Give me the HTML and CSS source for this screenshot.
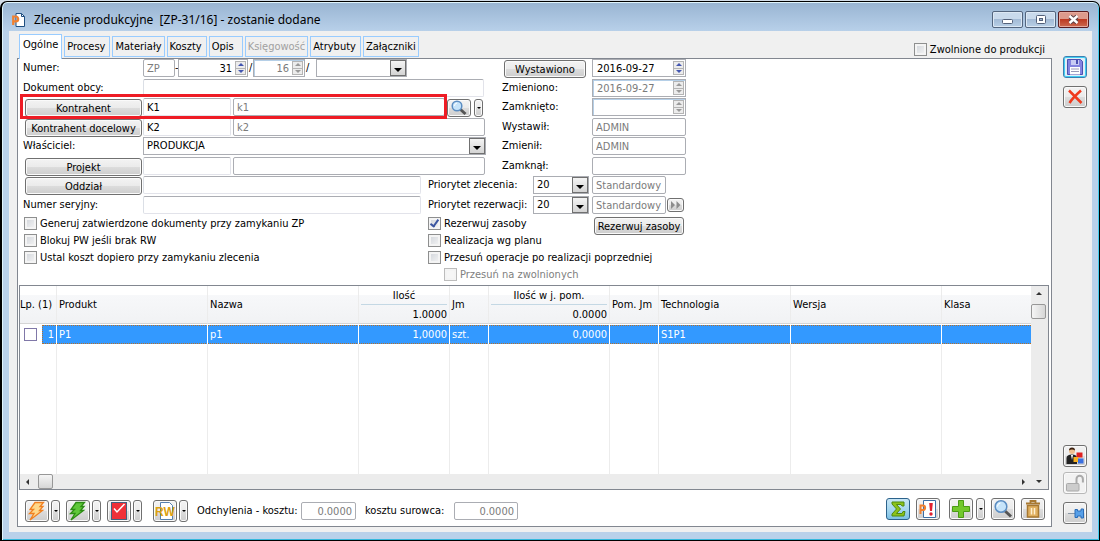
FILE: index.html
```html
<!DOCTYPE html>
<html lang="pl">
<head>
<meta charset="utf-8">
<title>Zlecenie produkcyjne</title>
<link rel="stylesheet" href="styles.css">
</head>
<body>
<div class="window">
  <header class="titlebar">
    <svg class="app-icon" width="14" height="14" viewBox="0 0 14 14" aria-hidden="true"><path d="M4 .5h5.500l3 3v10H4z" fill="#fff" stroke="#1f4e80"/><path d="M9.500.5v3h3" fill="none" stroke="#1f4e80"/><path d="M1.200 12V3.500h2.600a2.300 2.300 0 0 1 0 4.800H1.500" fill="none" stroke="#f08030" stroke-width="2.200"/></svg>
    <h1 class="title">Zlecenie produkcyjne&nbsp; [ZP-31/16] - zostanie dodane</h1>
    <div class="controls">
      <button class="ctl" aria-label="Minimalizuj"><svg width="29" height="15" viewBox="0 0 29 15"><rect x="9.500" y="7.500" width="10" height="4" rx="1" fill="#fff" stroke="#53617a"/></svg></button>
      <button class="ctl" aria-label="Maksymalizuj"><svg width="29" height="15" viewBox="0 0 29 15"><rect x="10.500" y="3.500" width="9" height="8" rx="1" fill="#fff" stroke="#53617a"/><rect x="13.500" y="6.500" width="3" height="2" fill="#9fb6d0" stroke="#53617a"/></svg></button>
      <button class="ctl ctl-close" aria-label="Zamknij"><svg width="29" height="15" viewBox="0 0 29 15"><path d="M11 4.500l7 6M18 4.500l-7 6" stroke="#5b4046" stroke-width="4.500"/><path d="M10.500 4l8 7M18.500 4l-8 7" stroke="#fff" stroke-width="2.400"/></svg></button>
    </div>
  </header>

  <div class="client">
    <main class="main">
      <div class="top">
        <nav class="tabs" role="tablist">
          <button class="tab tab-active" role="tab" aria-selected="true">Ogólne</button>
          <button class="tab tab-roomy" role="tab">Procesy</button>
          <button class="tab" role="tab">Materiały</button>
          <button class="tab tab-roomy" role="tab">Koszty</button>
          <button class="tab tab-opis" role="tab">Opis</button>
          <button class="tab" role="tab" disabled>Księgowość</button>
          <button class="tab tab-roomy" role="tab">Atrybuty</button>
          <button class="tab" role="tab">Załączniki</button>
        </nav>
        <label class="check released"><input type="checkbox">Zwolnione do produkcji</label>
      </div>

      <section class="panel">
        <form class="form">
          <div class="band">
            <div class="fields fields-wide">
              <div class="row">
                <label class="lab" for="nr">Numer:</label>
                <input class="box w-zp" value="ZP" disabled aria-label="Seria"><span class="sep">-</span>
                <span class="spinbox w-nr"><input id="nr" class="num" value="31"><span class="spin"><button type="button" class="up" aria-label="Więcej"></button><button type="button" class="down" aria-label="Mniej"></button></span></span><span class="sep sep-slash">/</span>
                <span class="spinbox w-year off"><input class="num" value="16" disabled aria-label="Rok"><span class="spin"><button type="button" class="up" aria-label="Więcej" disabled></button><button type="button" class="down" aria-label="Mniej" disabled></button></span></span><span class="sep sep-slash sep-last">/</span>
                <span class="combo w-suffix"><select aria-label="Sufiks"><option></option></select></span>
              </div>
              <div class="row"><label class="lab" for="dok">Dokument obcy:</label><input id="dok" class="box edit w-340"></div>
              <div class="row marked">
                <div class="lab"><button type="button" class="btn btn-lab">Kontrahent</button></div>
                <input class="box edit w-code" value="K1" aria-label="Kontrahent kod"><input class="box w-name-s" value="k1" disabled aria-label="Kontrahent nazwa">
                <button type="button" class="btn btn-find" aria-label="Szukaj"><svg width="18" height="16" viewBox="0 0 18 16"><path d="M10.500 9.500l5 4.500" stroke="#555" stroke-width="3"/><circle cx="7" cy="6" r="4.800" fill="#c6e4fa" stroke="#5b8dc2" stroke-width="1.500"/><path d="M4.500 6a3 3 0 0 1 2.500-3" stroke="#fff" fill="none"/></svg></button><button type="button" class="btn drop" aria-label="Więcej opcji"></button>
              </div>
              <div class="row">
                <div class="lab"><button type="button" class="btn btn-lab">Kontrahent docelowy</button></div>
                <input class="box edit w-code" value="K2" aria-label="Kontrahent docelowy kod"><input class="box w-name" value="k2" disabled aria-label="Kontrahent docelowy nazwa">
              </div>
              <div class="row"><label class="lab" for="own">Właściciel:</label><span class="combo w-343"><select id="own"><option>PRODUKCJA</option></select></span></div>
              <div class="row">
                <div class="lab"><button type="button" class="btn btn-lab">Projekt</button></div>
                <input class="box edit w-code" aria-label="Projekt kod"><input class="box w-name" disabled aria-label="Projekt nazwa">
              </div>
            </div>

            <div class="fields">
              <div class="row"><div class="lab lab-s"><button type="button" class="btn btn-date">Wystawiono</button></div><span class="spinbox w-94"><input value="2016-09-27" aria-label="Wystawiono"><span class="spin"><button type="button" class="up" aria-label="Więcej"></button><button type="button" class="down" aria-label="Mniej"></button></span></span></div>
              <div class="row"><label class="lab lab-s" for="zm">Zmieniono:</label><span class="spinbox w-94 off"><input id="zm" value="2016-09-27" disabled><span class="spin"><button type="button" class="up" aria-label="Więcej" disabled></button><button type="button" class="down" aria-label="Mniej" disabled></button></span></span></div>
              <div class="row"><label class="lab lab-s" for="za">Zamknięto:</label><span class="spinbox w-94 off"><input id="za" disabled><span class="spin"><button type="button" class="up" aria-label="Więcej" disabled></button><button type="button" class="down" aria-label="Mniej" disabled></button></span></span></div>
              <div class="row"><label class="lab lab-s" for="wy">Wystawił:</label><input id="wy" class="box w-94" value="ADMIN" disabled></div>
              <div class="row"><label class="lab lab-s" for="zi">Zmienił:</label><input id="zi" class="box w-94" value="ADMIN" disabled></div>
              <div class="row"><label class="lab lab-s" for="zk">Zamknął:</label><input id="zk" class="box w-94" disabled></div>
            </div>
          </div>

          <div class="band">
            <div class="half">
              <div class="fields">
                <div class="row"><div class="lab"><button type="button" class="btn btn-lab">Oddział</button></div><input class="box edit w-278" aria-label="Oddział"></div>
                <div class="row"><label class="lab" for="ser">Numer seryjny:</label><input id="ser" class="box edit w-278"></div>
              </div>
              <label class="check check-in"><input type="checkbox">Generuj zatwierdzone dokumenty przy zamykaniu ZP</label>
              <label class="check check-in"><input type="checkbox">Blokuj PW jeśli brak RW</label>
              <label class="check check-in"><input type="checkbox">Ustal koszt dopiero przy zamykaniu zlecenia</label>
            </div>
            <div class="half-right">
              <div class="fields">
                <div class="row"><label class="lab lab-p" for="pz">Priorytet zlecenia:</label><span class="combo w-prio"><select id="pz"><option>20</option></select></span><input class="box w-std" value="Standardowy" disabled aria-label="Opis priorytetu zlecenia"></div>
                <div class="row"><label class="lab lab-p" for="pr">Priorytet rezerwacji:</label><span class="combo w-prio"><select id="pr"><option>20</option></select></span><input class="box w-std" value="Standardowy" disabled aria-label="Opis priorytetu rezerwacji"><button type="button" class="btn btn-ff" aria-label="Dalej"><svg width="12" height="10" viewBox="0 0 12 10"><path d="M1 1l4 4-4 4zM6.500 1l4 4-4 4z" fill="#8d8d8d"/></svg></button></div>
              </div>
              <div class="reserve">
                <div>
                  <label class="check"><input type="checkbox" checked>Rezerwuj zasoby</label>
                  <label class="check"><input type="checkbox">Realizacja wg planu</label>
                  <label class="check"><input type="checkbox">Przesuń operacje po realizacji poprzedniej</label>
                  <label class="check check-sub"><input type="checkbox" disabled>Przesuń na zwolnionych</label>
                </div>
                <button type="button" class="btn btn-reserve">Rezerwuj zasoby</button>
              </div>
            </div>
          </div>
        </form>

        <div class="grid">
          <div class="grid-body">
            <table class="list">
              <colgroup><col class="c-lp"><col class="c-151"><col class="c-151"><col class="c-91"><col class="c-39"><col class="c-121"><col class="c-49"><col class="c-132"><col class="c-151"><col></colgroup>
              <thead>
                <tr><th class="th-lp">Lp. (1)</th><th>Produkt</th><th>Nazwa</th><th class="sum"><span class="sum-t">Ilość</span><span class="sum-v">1.0000</span></th><th>Jm</th><th class="sum"><span class="sum-t">Ilość w j. pom.</span><span class="sum-v">0.0000</span></th><th>Pom. Jm</th><th>Technologia</th><th>Wersja</th><th>Klasa</th></tr>
              </thead>
              <tbody>
                <tr class="sel"><td class="lp"><div class="lp-in"><input type="checkbox" aria-label="Zaznacz pozycję"><span class="lp-n">1</span></div></td><td>P1</td><td>p1</td><td class="r">1,0000</td><td>szt.</td><td class="r">0,0000</td><td></td><td>S1P1</td><td></td><td></td></tr>
                <tr class="rest"><td></td><td></td><td></td><td></td><td></td><td></td><td></td><td></td><td></td><td></td></tr>
              </tbody>
            </table>
          </div>
          <div class="vbar"><button class="sb" aria-label="W górę"><i class="tri-up"></i></button><span class="thumb"></span><button class="sb sb-end" aria-label="W dół"><i class="tri-down"></i></button></div>
          <div class="hbar"><button class="sb" aria-label="W lewo"><i class="tri-left"></i></button><span class="thumb"></span><button class="sb sb-end" aria-label="W prawo"><i class="tri-right"></i></button></div>
        </div>

        <footer class="foot">
          <div class="pair"><button class="btn tool" aria-label="Operacje"><svg width="20" height="20" viewBox="0 0 20 20"><path d="M8 1.500h8.500l-3.500 4h3l-3.500 4h3L3 19l4-6.500H2.500l4-4H3z" fill="#ffd88a" stroke="#f08020" stroke-width="1.300"/></svg></button><button class="btn drop drop-t" aria-label="Więcej"></button></div>
          <div class="pair"><button class="btn tool" aria-label="Generuj"><svg width="20" height="20" viewBox="0 0 20 20"><path d="M8 1.500h8.500l-3.500 4h3l-3.500 4h3L3 19l4-6.500H2.500l4-4H3z" fill="#5fc83a" stroke="#2c8c14" stroke-width="1.300"/></svg></button><button class="btn drop drop-t" aria-label="Więcej"></button></div>
          <div class="pair pair-gap"><button class="btn tool" aria-label="Zatwierdź"><svg width="20" height="20" viewBox="0 0 20 20"><rect x="2.500" y="1.500" width="15" height="17" fill="#f03038" stroke="#44607e"/><path d="M5 7.500l3 3.500L15.500 3" fill="none" stroke="#fff" stroke-width="1.500"/></svg></button><button class="btn drop drop-t" aria-label="Więcej"></button></div>
          <div class="pair"><button class="btn tool tool-rw" aria-label="RW"><svg width="22" height="20" viewBox="0 0 22 20"><path d="M6.500 1.500h9l3 3v14h-12z" fill="#fff" stroke="#5580b0"/><text x="11" y="15" text-anchor="middle" class="rw">RW</text></svg></button><button class="btn drop drop-t" aria-label="Więcej"></button></div>
          <label class="dev" for="dk">Odchylenia - kosztu:</label><input id="dk" class="box num w-dev" value="0.0000" disabled>
          <label class="dev2" for="ds">kosztu surowca:</label><input id="ds" class="box num w-raw" value="0.0000" disabled>
          <div class="right-tools">
            <button class="btn tool tool-on" aria-label="Suma"><svg width="20" height="20" viewBox="0 0 20 20"><path d="M4 3h12v4h-2l-1-1.500H8.500l4 4.500-4 4.500H14l1-2h2L16 17H4v-2l4.500-5L4 5z" fill="#8cc21a" stroke="#4f8a10"/></svg></button>
            <button class="btn tool" aria-label="Priorytet"><svg width="20" height="20" viewBox="0 0 20 20"><path d="M5.500 1.500h12v17h-12z" fill="#fff" stroke="#3a6ea5"/><path d="M2.500 15V6.500h2.300a2.200 2.200 0 0 1 0 4.600H2.500" fill="none" stroke="#f08030" stroke-width="2"/><path d="M11.200 4h3.600l-.8 8h-2z" fill="#e02030"/><circle cx="13" cy="15" r="1.700" fill="#e02030"/></svg></button>
            <div class="pair pair-add"><button class="btn tool" aria-label="Dodaj"><svg width="20" height="20" viewBox="0 0 20 20"><path d="M7.500 1.500h5v6h6v5h-6v6h-5v-6h-6v-5h6z" fill="#72c82c" stroke="#4a9a14"/></svg></button><button class="btn drop drop-t" aria-label="Więcej"></button></div>
            <button class="btn tool" aria-label="Podgląd"><svg width="20" height="20" viewBox="0 0 20 20"><path d="M12 12l6 5.500" stroke="#555" stroke-width="3"/><circle cx="8" cy="7.500" r="5.800" fill="#c6e4fa" stroke="#5b8dc2" stroke-width="1.500"/><path d="M4.500 7.500a3.500 3.500 0 0 1 3-3.500" stroke="#fff" fill="none"/></svg></button>
            <button class="btn tool tool-bin" aria-label="Usuń"><svg width="20" height="20" viewBox="0 0 20 20"><path d="M3 4.500h14M7.500 4V2h5v2" fill="none" stroke="#a87830" stroke-width="1.800"/><path d="M4.500 6.500h11v11.500h-11z" fill="#e0b060" stroke="#a87830" stroke-width="1.500"/><path d="M8.500 9v6.500M11.500 9v6.500" stroke="#fff0d0" stroke-width="1.500"/></svg></button>
          </div>
        </footer>
      </section>
    </main>

    <aside class="side">
      <button class="btn tool tool-save" aria-label="Zapisz"><svg width="20" height="20" viewBox="0 0 20 20"><path d="M2.500 2.500h13l2 2v13h-15z" fill="#8484e0" stroke="#4c50b0"/><path d="M6 3h8v5H6z" fill="#c8ccf4"/><path d="M11 3h2v4h-2z" fill="#4c50b0"/><path d="M5 10h10v7.500H5z" fill="#fff"/><path d="M6 12h8M6 14.500h8" stroke="#9a9ab8"/></svg></button>
      <button class="btn tool" aria-label="Anuluj"><svg width="20" height="20" viewBox="0 0 20 20"><path d="M4 3.500c4 4 8 8 12.500 12.500M16 3.500C11.500 7.500 7.500 11 4.500 16" fill="none" stroke="#f03a1e" stroke-width="2.500"/></svg></button>
      <button class="btn tool tool-user" aria-label="Użytkownik"><svg width="20" height="20" viewBox="0 0 20 20"><circle cx="7" cy="5" r="3" fill="#f0c090"/><path d="M4 4.500a3 3 0 0 1 6 0c-2-1.500-4-1.500-6 0z" fill="#3a2010"/><path d="M1.500 18v-6c0-2 2-3.500 5.500-3.500S12 10 12 12v6z" fill="#222"/><path d="M6 9h2l-1 5z" fill="#fff"/><path d="M11.500 6.500h6v5h-6z" fill="#e02020"/><path d="M8.500 11h5v5h-5z" fill="#f8b020"/><path d="M13 12.500h5.500v5H13z" fill="#3a6fe0"/></svg></button>
      <button class="btn tool tool-lock" aria-label="Odblokuj" disabled><svg width="20" height="20" viewBox="0 0 20 20"><path d="M11.500 10V6a3.200 3.200 0 0 1 6.400 0v3.500" fill="none" stroke="#aaa" stroke-width="2"/><rect x="1.500" y="10.500" width="12.500" height="7.500" rx="1" fill="#ccc" stroke="#aaa"/></svg></button>
      <button class="btn tool" aria-label="Przypnij"><svg width="20" height="20" viewBox="0 0 20 20"><path d="M3 10.500h7" stroke="#8a98a8"/><path d="M10 6.500h2.500V8H16V6h2.500v9H16v-2h-3.500v1.500H10z" fill="#58a0e8" stroke="#2a6cb8"/></svg></button>
    </aside>
  </div>
</div>
</body>
</html>
```
FILE: styles.css
```css
*, ::before, ::after { box-sizing: border-box; }

body {
  margin: 0;
  background: #d3dde8;
  color: #000;
  font: 11px/14px "DejaVu Sans Condensed", "DejaVu Sans", sans-serif;
}

button, input, select { font: inherit; color: inherit; margin: 0; padding: 0; }
button { cursor: default; }
svg { display: block; }

/* Window frame */
.window {
  display: flex;
  flex-direction: column;
  min-height: calc(100vh - 1px);
  margin-top: 1px;
  padding: 0 7px 8px;
  border: 1px solid #000;
  border-left-width: 2px;
  border-radius: 7px 7px 0 0;
  box-shadow: inset 0 1px #dff4fc, inset 1px 0 #dff4fc, inset -1px 0 #45cdee, inset 0 -1px #35b8dc;
  background: linear-gradient(#98b4d2, #b9d1ea 30px);
}

.titlebar { display: flex; align-items: center; height: 29px; padding-left: 3px; }
.title { margin: 0 auto 0 8px; padding-top: 7px; font: 12px/16px "Noto Sans", sans-serif; }
.app-icon { margin-top: 6px; }
.controls { display: flex; gap: 2px; margin-top: 6px; padding-right: 3px; }
.ctl {
  width: 31px;
  height: 17px;
  border: 1px solid #53657e;
  border-radius: 2px;
  background: linear-gradient(#c9daec 45%, #a3bbd6 50%, #b8cfe6);
  box-shadow: inset 0 0 0 1px #dce8f4;
}
.ctl-close {
  border-color: #5a1c20;
  background: linear-gradient(#dd9a8c 45%, #bd3a22 50%, #cc6a50);
  box-shadow: inset 0 0 0 1px #e6aa9e;
}

.client { display: flex; flex: 1; background: #f0f0f0; }
.main { display: flex; flex: 1; flex-direction: column; padding: 3px 0 5px 8px; }

/* Tabs */
.top { display: flex; justify-content: space-between; align-items: flex-start; padding: 0 7px 0 2px; }
.tabs { display: flex; gap: 2px; align-items: flex-start; }
.tab {
  height: 21px;
  margin-top: 2px;
  padding: 1px 2px 0;
  border: 1px solid #99ccff;
  background: #f0f0f0;
}
.tab:disabled { color: #a0a0a0; }
.tab-roomy { padding-right: 4px; }
.tab-active {
  z-index: 1;
  height: 25px;
  margin: 0 0 -1px;
  padding: 0 3px 4px;
  border-bottom: 0;
  background: #fff;
}
.tab-opis { padding-right: 8px; }
.released { margin-top: 7px; }

.panel {
  display: flex;
  flex: 1;
  flex-direction: column;
  border: 1px solid #828790;
  background: #fff;
}

/* Form */
.form { padding: 0 5px; }
.band { display: flex; }
.fields { display: grid; grid-auto-rows: 20px 19px; }
.fields-wide { width: 479px; }
.row { position: relative; display: flex; height: 18px; align-items: center; }
.lab { flex: none; width: 120px; }
label.lab { height: 14px; }
.lab-s { width: 90px; }
.lab-p { width: 105px; }

.box, .spinbox, .combo {
  flex: none;
  height: 18px;
  border: 1px solid #abadb3;
  border-radius: 2px;
  background: #fff;
}
.box { padding: 0 3px; }
.box:disabled, .spinbox input:disabled { color: #7b7b7b; }
.edit { border-color: #abadb3 #e2e3ea #e2e3ea #dbdfe6; }
.num { text-align: right; }

.spinbox { display: flex; border-radius: 0; padding: 0 1px; }
.spinbox input { flex: 1; min-width: 0; padding: 1px 3px 0; border: 0; background: none; }
.off { box-shadow: inset 1px 1px #b5cfe7; }
.spin { display: flex; flex-direction: column; width: 11px; padding: 1px 0; }
.spin button {
  display: flex;
  flex: 1;
  align-items: center;
  justify-content: center;
  border: 1px solid #b4b4b4;
  background: #ececec;
}
.spin button + button { border-top: 0; }
.up::before, .down::before { content: ""; border: 3px solid transparent; }
.up::before { border-top: 0; border-bottom-color: #4356b0; }
.down::before { border-bottom: 0; border-top-color: #4356b0; }
.up:disabled::before { border-bottom-color: #999; }
.down:disabled::before { border-top-color: #999; }

.combo { position: relative; display: flex; border-radius: 0; }
.combo select {
  flex: 1;
  min-width: 0;
  padding: 0 18px 0 3px;
  border: 0;
  appearance: none;
  background: none;
}
.combo::before {
  content: "";
  position: absolute;
  inset: 0 0 0 auto;
  width: 16px;
  border: 1px solid #707070;
  background: linear-gradient(#f4f4f4, #d4d4d4);
  pointer-events: none;
}
.combo::after {
  content: "";
  position: absolute;
  right: 4px;
  top: 8px;
  border: 4px solid transparent;
  border-top-color: #000;
  border-bottom: 0;
  pointer-events: none;
}

.w-zp { width: 32px; }
.w-nr { width: 70px; }
.w-year { width: 52px; }
.w-suffix { width: 91px; }
.w-340 { width: 341px; }
.w-343 { width: 343px; }
.w-code { width: 88px; margin-right: 2px; }
.w-name { width: 252px; }
.w-name-s { width: 212px; }
.w-94 { width: 94px; }
.w-278 { width: 278px; }
.w-prio { width: 56px; margin-right: 3px; }
.w-std { width: 74px; }
.sep { width: 3px; overflow: hidden; }
.sep-slash { width: 5px; padding-left: 1px; overflow: visible; }
.sep-last { width: 11px; }

/* Highlight frame around the customer row */
.marked { z-index: 1; }
.marked::after {
  content: "";
  position: absolute;
  left: -3px;
  top: -4px;
  width: 427px;
  height: 25px;
  border: 3px solid #ee1c25;
  pointer-events: none;
}

.btn {
  display: flex;
  align-items: center;
  justify-content: center;
  flex: none;
  border: 1px solid #707070;
  border-radius: 3px;
  background: linear-gradient(#f3f3f3, #ebebeb 48%, #dcdcdc 52%, #cdcdcd);
  box-shadow: inset 0 0 0 1px #fafafa;
}
.btn-lab { width: 117px; height: 18px; margin: 2px 0 0 2px; padding-top: 1px; }
.btn-date { width: 82px; height: 18px; margin: 2px 0 0 2px; padding-top: 1px; }
.btn-find { width: 24px; height: 18px; margin: 2px 3px 0 2px; }
.btn-ff { width: 17px; height: 14px; margin-left: 1px; }
.btn-reserve { width: 90px; height: 18px; margin-top: 2px; padding-top: 1px; }
.drop { width: 9px; height: 18px; margin-top: 2px; }
.drop::before { content: ""; border: 2px solid transparent; border-top-color: #000; border-bottom: 0; }

.half { width: 405px; }
.check { display: flex; align-items: center; gap: 3px; height: 17px; white-space: nowrap; }
.check-in { padding-left: 1px; }
.check-sub { padding-left: 16px; color: #808080; }
input[type="checkbox"] {
  display: grid;
  place-items: center;
  flex: none;
  width: 13px;
  height: 13px;
  appearance: none;
  border: 1px solid #8e8f8f;
  background: linear-gradient(135deg, #cfd3d9, #f6f6f6);
  box-shadow: inset 0 0 0 2px #f4f4f4;
}
input[type="checkbox"]:checked::before {
  content: "";
  width: 5px;
  height: 9px;
  margin-bottom: 2px;
  border: solid #3a55a0;
  border-width: 0 2px 2px 0;
  transform: rotate(35deg);
}
input[type="checkbox"]:disabled { border-color: #bcbcbc; background: #f6f6f6; }
.reserve { position: relative; display: flex; align-items: flex-start; }
.reserve .btn { position: absolute; left: 166px; }

/* Item list */
.grid {
  display: grid;
  flex: 1;
  grid-template: 1fr 15px / 1fr 17px;
  margin: 2px 2px 0 1px;
  border: 1px solid #828790;
}
.grid-body { display: flex; min-height: 186px; }
.list { width: 100%; table-layout: fixed; border-collapse: separate; border-spacing: 0; }
.c-lp { width: 37px; }
.c-151 { width: 151px; }
.c-91 { width: 91px; }
.c-39 { width: 39px; }
.c-121 { width: 121px; }
.c-49 { width: 49px; }
.c-132 { width: 132px; }
.list th, .list td { padding: 1px 2px 0; border-right: 1px solid #ececec; text-align: left; font-weight: normal; white-space: nowrap; }
.list th {
  height: 38px;
  border-bottom: 1px solid #d5d5d5;
  background: linear-gradient(#fff 9px, #f7f8fa 9px, #f1f2f4);
}
.list th:last-child, .list td:last-child { border-right: 0; }
.list .th-lp { padding: 1px 0 0; }
.list .sum { padding: 0 2px; }
.sum-t, .sum-v { display: block; height: 18px; line-height: 18px; }
.sum-t { border-bottom: 1px solid #c4d8e4; text-align: center; }
.sum-v { line-height: 20px; text-align: right; }
.list .sel td {
  height: 20px;
  border-top: 1px solid #fff;
  border-right-color: #fff;
  background:
    repeating-linear-gradient(90deg, #b5702c 0 1px, #3399ff 1px 2px) top / 100% 1px no-repeat,
    repeating-linear-gradient(90deg, #b5702c 0 1px, #3399ff 1px 2px) bottom / 100% 1px no-repeat,
    #3399ff;
  background-clip: padding-box;
  color: #fff;
}
.list .sel .lp { padding: 0; background: #fff; }
.lp-in { display: flex; align-items: center; padding-left: 4px; }
.lp-in input[type="checkbox"] { border-color: #8078a8; background: #fff; box-shadow: none; }
.lp-n {
  flex: 1;
  height: 19px;
  margin-left: 5px;
  padding-right: 2px;
  border: 1px dotted #b5702c;
  border-right: 0;
  background: #3399ff;
  line-height: 18px;
  text-align: right;
}
.list .r { text-align: right; }

.vbar, .hbar { display: flex; background: #ececec; }
.vbar { grid-row: 1 / 3; grid-column: 2; flex-direction: column; align-items: flex-start; }
.hbar { grid-row: 2; grid-column: 1; }
.sb { display: grid; place-items: center; width: 15px; height: 15px; border: 0; background: none; }
.thumb { width: 15px; height: 15px; border: 1px solid #979797; border-radius: 2px; background: linear-gradient(90deg, #f5f5f5, #d6d6d6); }
.hbar .thumb { margin-left: 3px; background: linear-gradient(#f5f5f5, #d6d6d6); }
.vbar .thumb { margin-top: 3px; }
.vbar .sb-end { margin-top: auto; }
.hbar .sb-end { margin-left: auto; }
.tri-up, .tri-down, .tri-left, .tri-right { border: 3px solid transparent; }
.tri-up { border-top: 0; border-bottom-color: #333; }
.tri-down { border-bottom: 0; border-top-color: #333; }
.tri-left { border-left: 0; border-right-color: #333; }
.tri-right { border-right: 0; border-left-color: #333; }

/* Footer toolbar */
.foot { display: flex; align-items: center; min-height: 36px; padding: 8px 6px 2px 7px; }
.pair { display: flex; gap: 2px; margin-right: 6px; }
.pair-gap { margin-right: 11px; }
.tool { width: 24px; height: 22px; }
.drop-t { height: 22px; margin-top: 0; }
.rw { font: bold 12px "Liberation Sans", sans-serif; fill: #dca010; }
.dev { margin-left: 3px; width: 104px; }
.dev2 { margin-left: 9px; width: 89px; }
.w-dev { width: 55px; }
.w-raw { width: 64px; }
.right-tools { display: flex; align-self: flex-start; gap: 6px; margin-left: auto; }
.pair-add { gap: 3px; margin: 0 0 0 3px; }
.tool-on { border-color: #2c628b; background: linear-gradient(#c8e6f6, #a8d8f0 50%, #7cc0e4); box-shadow: none; }

.side { display: flex; flex-direction: column; gap: 8px; width: 40px; padding: 25px 5px 8px 11px; }
.main { min-width: 0; }
.tool-save { border-color: #3c7fb1; box-shadow: inset 0 0 0 1px #40d0f4; background: #e0eef8; }
.tool-user { margin-top: auto; }
.tool-lock { margin-top: -3px; border-color: #b8b8b8; background: #f2f2f2; }
```
